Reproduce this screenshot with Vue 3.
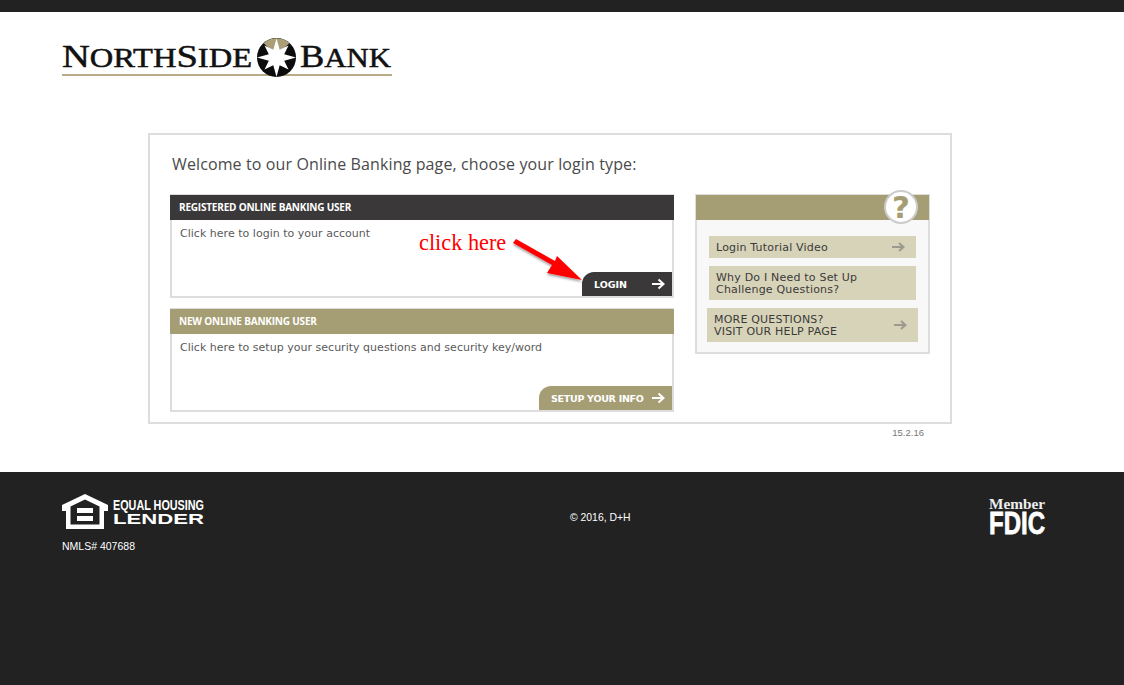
<script setup>
const helpLinks = [
  { lines: ['Login Tutorial Video'], arrow: true, cls: 'tutorial' },
  { lines: ['Why Do I Need to Set Up', 'Challenge Questions?'], arrow: false, cls: 'why' },
  { lines: ['MORE QUESTIONS?', 'VISIT OUR HELP PAGE'], arrow: true, cls: 'more' }
]
</script>

<template>
  <div class="page">
    <div class="top-bar"></div>

    <header class="masthead">
      <svg class="logo" width="332" height="42" viewBox="0 0 332 42">
        <rect x="0" y="37" width="330" height="2" fill="#b8ac88" />
        <text x="0" y="30" class="logo-text" textLength="190" lengthAdjust="spacingAndGlyphs">N<tspan font-size="27">ORTH</tspan>S<tspan font-size="27">IDE</tspan></text>
        <text x="238" y="30" class="logo-text" textLength="91" lengthAdjust="spacingAndGlyphs">B<tspan font-size="27">ANK</tspan></text>
        <g transform="translate(214.5 20.5)">
          <circle r="19.5" fill="#0c0c0c" />
          <path d="M-13 -14.4A19.5 19.5 0 0 1 13 -14.4L0 -2Z" fill="#ab9f78" />
          <polygon fill="#fff" points="0,-19 3.2,-7.7 12,-12 7.7,-3.2 19.5,0 7.7,3.2 12,12 3.2,7.7 0,19.5 -3.2,7.7 -12,12 -7.7,3.2 -19.5,0 -7.7,-3.2 -12,-12 -3.2,-7.7" />
        </g>
      </svg>
    </header>

    <main class="card">
      <h1 class="card-title">Welcome to our Online Banking page, choose your login type:</h1>
      <div class="columns">
        <div class="login-types">
          <section class="panel">
            <h2 class="panel-head dark">REGISTERED ONLINE BANKING USER</h2>
            <p class="panel-text">Click here to login to your account</p>
            <a class="action dark login">
              <span>LOGIN</span>
              <svg width="14" height="12" viewBox="0 0 14 12"><path d="M1 6H12M7.5 1.5L12.500 6L7.5 10.500" fill="none" stroke="#fff" stroke-width="2" /></svg>
            </a>
            <span class="click-here">click here</span>
            <svg class="red-arrow" width="80" height="50" viewBox="0 0 80 50">
              <defs>
                <filter id="arrow-shadow" x="-20%" y="-20%" width="140%" height="150%">
                  <feDropShadow dx="0" dy="2" stdDeviation="1.2" flood-color="#000" flood-opacity="0.35" />
                </filter>
              </defs>
              <polygon filter="url(#arrow-shadow)" fill="#f00" points="4,2 43,24 45,19 70,43 35,36 40,28 1,6" />
            </svg>
          </section>

          <section class="panel">
            <h2 class="panel-head tan">NEW ONLINE BANKING USER</h2>
            <p class="panel-text">Click here to setup your security questions and security key/word</p>
            <a class="action tan setup">
              <span>SETUP YOUR INFO</span>
              <svg width="14" height="12" viewBox="0 0 14 12"><path d="M1 6H12M7.5 1.5L12.500 6L7.5 10.500" fill="none" stroke="#fff" stroke-width="2" /></svg>
            </a>
          </section>
        </div>

        <aside class="help">
          <div class="help-head">
            <span class="help-mark">?</span>
          </div>
          <div class="help-links">
            <a v-for="link in helpLinks" :key="link.cls" class="help-link" :class="link.cls">
              <span class="help-label">
                <span v-for="line in link.lines" :key="line" class="help-line">{{ line }}</span>
              </span>
              <svg v-if="link.arrow" width="13" height="10" viewBox="0 0 13 10"><path d="M0 5H11M7 1L11.500 5L7 9" fill="none" stroke="#9a9a90" stroke-width="2" /></svg>
            </a>
          </div>
        </aside>
      </div>
    </main>

    <div class="version">15.2.16</div>

    <footer class="footer">
      <div class="footer-left">
        <svg class="eho" width="190" height="36" viewBox="0 0 190 36">
          <path fill-rule="evenodd" fill="#fff" d="M23 0L46 11V17H42V35H4V17H0V11ZM23 5.500L8.500 12.500V30.500H37.500V12.500ZM15 14H31V19H15ZM15 22H31V27H15Z" />
          <text x="51" y="16" class="eho-top" textLength="91" lengthAdjust="spacingAndGlyphs">EQUAL HOUSING</text>
          <text x="51" y="30" class="eho-bottom" textLength="91" lengthAdjust="spacingAndGlyphs">LENDER</text>
        </svg>
        <div class="nmls">NMLS# 407688</div>
      </div>
      <div class="copyright">© 2016, D+H</div>
      <svg class="fdic" width="84" height="48" viewBox="0 0 84 48">
        <text x="1" y="14" class="fdic-member" textLength="56" lengthAdjust="spacingAndGlyphs">Member</text>
        <text x="1" y="39" class="fdic-name" textLength="56" lengthAdjust="spacingAndGlyphs">FDIC</text>
      </svg>
    </footer>
  </div>
</template>

<style>
body {
  background: #fff;
}
</style>

<style scoped>
.page {
  width: 1124px;
  height: 685px;
  display: flex;
  flex-direction: column;
  overflow: hidden;
  font-family: "DejaVu Sans", Verdana, sans-serif;
}

.top-bar {
  height: 12px;
  background: #222;
}

.masthead {
  height: 121px;
  padding: 25px 0 0 62px;
  box-sizing: border-box;
}

.logo {
  display: block;
}

.logo-text {
  font-family: "Liberation Serif", serif;
  font-size: 32px;
  fill: #111;
  stroke: #111;
  stroke-width: 0.5;
}

.card {
  width: 804px;
  height: 291px;
  margin-left: 148px;
  padding: 0 20px;
  box-sizing: border-box;
  border: 2px solid #ddd;
}

.card-title {
  margin: 0;
  padding: 18px 0 0 2px;
  height: 59px;
  box-sizing: border-box;
  font-family: "Open Sans", sans-serif;
  font-weight: 400;
  font-size: 16px;
  line-height: 22px;
  letter-spacing: 0.12px;
  color: #4a4a4a;
}

.columns {
  display: flex;
  gap: 21px;
  align-items: flex-start;
}

.login-types {
  width: 504px;
  display: flex;
  flex-direction: column;
  gap: 10px;
}

.panel {
  position: relative;
  height: 104px;
  box-sizing: border-box;
  border: 2px solid #ddd;
}

.panel-head {
  margin: -1px -2px 0;
  height: 25px;
  padding-left: 9px;
  font-family: "Open Sans", sans-serif;
  font-size: 10px;
  font-weight: 700;
  line-height: 24px;
  letter-spacing: -0.2px;
  color: #fff;
}

.dark {
  background: #3b3839;
}

.tan {
  background: #a59e74;
}

.panel-text {
  margin: 0;
  padding: 7px 0 0 8px;
  font-size: 11px;
  line-height: 13px;
  letter-spacing: 0.02px;
  color: #5a5a5a;
}

.action {
  position: absolute;
  right: 0;
  bottom: 0;
  height: 24px;
  display: flex;
  align-items: center;
  justify-content: space-between;
  box-sizing: border-box;
  padding: 0 7px 0 12px;
  border-top-left-radius: 12px;
  font-size: 9.5px;
  font-weight: 700;
  white-space: nowrap;
  color: #fff;
}

.login {
  width: 90px;
}

.setup {
  width: 133px;
  letter-spacing: -0.28px;
}

.click-here {
  position: absolute;
  left: 247px;
  top: 34px;
  font-family: "Liberation Serif", serif;
  font-size: 22.3px;
  line-height: 26px;
  color: #f00;
}

.red-arrow {
  position: absolute;
  left: 340px;
  top: 41px;
}

.help {
  width: 235px;
  height: 160px;
  box-sizing: border-box;
  border: 2px solid #ddd;
  background: #f8f8f8;
}

.help-head {
  position: relative;
  margin: -1px -1px 0;
  height: 25px;
  background: #a59e74;
}

.help-mark {
  position: absolute;
  right: 11px;
  top: -5px;
  width: 34px;
  height: 34px;
  box-sizing: border-box;
  border: 2px solid #ccc;
  border-radius: 50%;
  background: #fff;
  font-family: "DejaVu Sans", sans-serif;
  font-size: 31px;
  font-weight: 700;
  line-height: 30px;
  text-align: center;
  color: #a59e74;
}

.help-links {
  display: flex;
  flex-direction: column;
  gap: 8px;
  padding: 16px 12px 0;
}

.help-link {
  display: flex;
  align-items: center;
  justify-content: space-between;
  box-sizing: border-box;
  padding: 0 11px 0 7px;
  background: #d7d3b8;
  font-size: 11px;
  line-height: 12px;
  letter-spacing: 0.2px;
  color: #3a3a3a;
}

.help-label {
  padding-top: 1px;
}

.tutorial {
  height: 22px;
}

.why {
  height: 34px;
}

.more {
  height: 34px;
  margin: 0 -2px;
}

.help-line {
  display: block;
}

.version {
  width: 776px;
  margin-left: 148px;
  height: 48px;
  padding-top: 3px;
  box-sizing: border-box;
  font-family: "Liberation Sans", sans-serif;
  font-size: 9.5px;
  line-height: 12px;
  text-align: right;
  color: #777;
}

.footer {
  flex: 1;
  display: grid;
  grid-template-columns: 508px 62px 1fr;
  align-items: start;
  padding: 22px 78px 0 62px;
  background: #222;
  color: #fff;
}

.eho {
  display: block;
}

.eho-top {
  font-family: "Liberation Sans", sans-serif;
  font-size: 14px;
  font-weight: 700;
  fill: #fff;
}

.eho-bottom {
  font-family: "Liberation Sans", sans-serif;
  font-size: 15px;
  font-weight: 700;
  fill: #fff;
}

.nmls {
  margin-top: 9px;
  font-family: "Liberation Sans", sans-serif;
  font-size: 10.5px;
  line-height: 14px;
}

.copyright {
  margin-top: 17px;
  font-family: "Liberation Sans", sans-serif;
  font-size: 10.4px;
  line-height: 14px;
  white-space: nowrap;
}

.fdic {
  justify-self: end;
  margin-top: 1px;
  margin-right: -26px;
}

.fdic-member {
  font-family: "Liberation Serif", serif;
  font-size: 14px;
  font-weight: 700;
  fill: #eee;
}

.fdic-name {
  font-family: "Liberation Sans", sans-serif;
  font-size: 32px;
  font-weight: 700;
  fill: #fff;
  stroke: #fff;
  stroke-width: 0.8;
}
</style>
